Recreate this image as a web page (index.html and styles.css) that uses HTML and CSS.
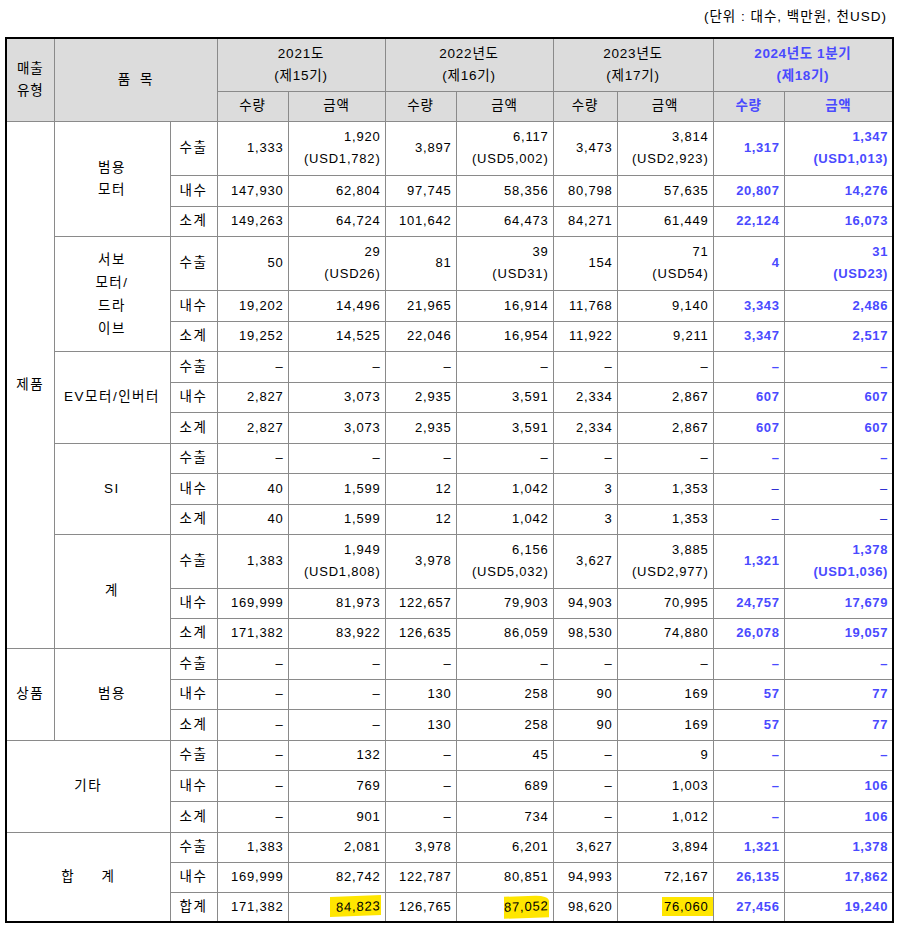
FILE: index.html
```html
<!DOCTYPE html>
<html lang="ko">
<head>
<meta charset="utf-8">
<link rel="stylesheet" href="styles.css">
</head>
<body>
<div class="unit">(단위 : 대수, 백만원, 천USD)</div>
<table class="sales">
<colgroup>
<col class="c1"><col class="c2"><col class="c3">
<col class="c4"><col class="c5"><col class="c6"><col class="c7">
<col class="c8"><col class="c9"><col class="c10"><col class="c11">
</colgroup>
<thead>
<tr class="h1">
<th rowspan="2">매출<br>유형</th>
<th rowspan="2" colspan="2">품 &nbsp;목</th>
<th colspan="2">2021도<br>(제15기)</th>
<th colspan="2">2022년도<br>(제16기)</th>
<th colspan="2">2023년도<br>(제17기)</th>
<th colspan="2" class="b">2024년도 1분기<br>(제18기)</th>
</tr>
<tr class="h2">
<th>수량</th><th>금액</th><th>수량</th><th>금액</th><th>수량</th><th>금액</th><th class="b">수량</th><th class="b">금액</th>
</tr>
</thead>
<tbody>
<tr class="d">
<td rowspan="15" class="lab">제품</td>
<td rowspan="3" class="lab">범용<br>모터</td>
<td class="lab">수출</td>
<td>1,333</td><td>1,920<br>(USD1,782)</td><td>3,897</td><td>6,117<br>(USD5,002)</td><td>3,473</td><td>3,814<br>(USD2,923)</td><td class="b">1,317</td><td class="b">1,347<br>(USD1,013)</td>
</tr>
<tr class="l"><td class="lab">내수</td><td>147,930</td><td>62,804</td><td>97,745</td><td>58,356</td><td>80,798</td><td>57,635</td><td class="b">20,807</td><td class="b">14,276</td></tr>
<tr class="s"><td class="lab">소계</td><td>149,263</td><td>64,724</td><td>101,642</td><td>64,473</td><td>84,271</td><td>61,449</td><td class="b">22,124</td><td class="b">16,073</td></tr>

<tr class="d">
<td rowspan="3" class="lab tall">서보<br>모터/<br>드라<br>이브</td>
<td class="lab">수출</td>
<td>50</td><td>29<br>(USD26)</td><td>81</td><td>39<br>(USD31)</td><td>154</td><td>71<br>(USD54)</td><td class="b">4</td><td class="b">31<br>(USD23)</td>
</tr>
<tr class="l"><td class="lab">내수</td><td>19,202</td><td>14,496</td><td>21,965</td><td>16,914</td><td>11,768</td><td>9,140</td><td class="b">3,343</td><td class="b">2,486</td></tr>
<tr class="s"><td class="lab">소계</td><td>19,252</td><td>14,525</td><td>22,046</td><td>16,954</td><td>11,922</td><td>9,211</td><td class="b">3,347</td><td class="b">2,517</td></tr>

<tr class="l">
<td rowspan="3" class="lab">EV모터/인버터</td>
<td class="lab">수출</td>
<td>–</td><td>–</td><td>–</td><td>–</td><td>–</td><td>–</td><td class="b">–</td><td class="b">–</td>
</tr>
<tr class="s"><td class="lab">내수</td><td>2,827</td><td>3,073</td><td>2,935</td><td>3,591</td><td>2,334</td><td>2,867</td><td class="b">607</td><td class="b">607</td></tr>
<tr class="l"><td class="lab">소계</td><td>2,827</td><td>3,073</td><td>2,935</td><td>3,591</td><td>2,334</td><td>2,867</td><td class="b">607</td><td class="b">607</td></tr>

<tr class="s">
<td rowspan="3" class="lab">SI</td>
<td class="lab">수출</td>
<td>–</td><td>–</td><td>–</td><td>–</td><td>–</td><td>–</td><td class="b">–</td><td class="b">–</td>
</tr>
<tr class="l"><td class="lab">내수</td><td>40</td><td>1,599</td><td>12</td><td>1,042</td><td>3</td><td>1,353</td><td class="db">–</td><td class="db">–</td></tr>
<tr class="s"><td class="lab">소계</td><td>40</td><td>1,599</td><td>12</td><td>1,042</td><td>3</td><td>1,353</td><td class="db">–</td><td class="db">–</td></tr>

<tr class="d">
<td rowspan="3" class="lab">계</td>
<td class="lab">수출</td>
<td>1,383</td><td>1,949<br>(USD1,808)</td><td>3,978</td><td>6,156<br>(USD5,032)</td><td>3,627</td><td>3,885<br>(USD2,977)</td><td class="b">1,321</td><td class="b">1,378<br>(USD1,036)</td>
</tr>
<tr class="s"><td class="lab">내수</td><td>169,999</td><td>81,973</td><td>122,657</td><td>79,903</td><td>94,903</td><td>70,995</td><td class="b">24,757</td><td class="b">17,679</td></tr>
<tr class="s"><td class="lab">소계</td><td>171,382</td><td>83,922</td><td>126,635</td><td>86,059</td><td>98,530</td><td>74,880</td><td class="b">26,078</td><td class="b">19,057</td></tr>

<tr class="l">
<td rowspan="3" class="lab">상품</td>
<td rowspan="3" class="lab">범용</td>
<td class="lab">수출</td>
<td>–</td><td>–</td><td>–</td><td>–</td><td>–</td><td>–</td><td class="b">–</td><td class="b">–</td>
</tr>
<tr class="s"><td class="lab">내수</td><td>–</td><td>–</td><td>130</td><td>258</td><td>90</td><td>169</td><td class="b">57</td><td class="b">77</td></tr>
<tr class="l"><td class="lab">소계</td><td>–</td><td>–</td><td>130</td><td>258</td><td>90</td><td>169</td><td class="b">57</td><td class="b">77</td></tr>

<tr class="s">
<td rowspan="3" colspan="2" class="lab">기타</td>
<td class="lab">수출</td>
<td>–</td><td>132</td><td>–</td><td>45</td><td>–</td><td>9</td><td class="b">–</td><td class="b">–</td>
</tr>
<tr class="l"><td class="lab">내수</td><td>–</td><td>769</td><td>–</td><td>689</td><td>–</td><td>1,003</td><td class="b">–</td><td class="b">106</td></tr>
<tr class="l"><td class="lab">소계</td><td>–</td><td>901</td><td>–</td><td>734</td><td>–</td><td>1,012</td><td class="b">–</td><td class="b">106</td></tr>

<tr class="s">
<td rowspan="3" colspan="2" class="lab">합 &nbsp; &nbsp; 계</td>
<td class="lab">수출</td>
<td>1,383</td><td>2,081</td><td>3,978</td><td>6,201</td><td>3,627</td><td>3,894</td><td class="b">1,321</td><td class="b">1,378</td>
</tr>
<tr class="s"><td class="lab">내수</td><td>169,999</td><td>82,742</td><td>122,787</td><td>80,851</td><td>94,993</td><td>72,167</td><td class="b">26,135</td><td class="b">17,862</td></tr>
<tr class="s"><td class="lab">합계</td><td>171,382</td><td><span class="hl hl1">84,823</span></td><td>126,765</td><td><span class="hl hl2">87,052</span></td><td>98,620</td><td><span class="hl hl3">76,060</span></td><td class="b">27,456</td><td class="b">19,240</td></tr>
</tbody>
</table>
</body>
</html>
```
FILE: styles.css
```css
html, body {
  margin: 0;
  padding: 0;
  background: #ffffff;
}
body {
  padding: 0 0 0 5px;
  font-family: "Liberation Sans", "Noto Sans CJK KR", sans-serif;
  font-size: 13px;
  color: #000;
}
.unit {
  width: 882px;
  height: 37px;
  line-height: 33px;
  text-align: right;
  letter-spacing: 1px;
  font-size: 13.5px;
}
.sales {
  border-collapse: collapse;
  table-layout: fixed;
  width: 889px;
  border: 2px solid #000;
}
.c1 { width: 48px; }
.c2 { width: 116px; }
.c3 { width: 47px; }
.c4 { width: 71px; }
.c5 { width: 97px; }
.c6 { width: 71px; }
.c7 { width: 97px; }
.c8 { width: 64px; }
.c9 { width: 96px; }
.c10 { width: 71px; }
.c11 { width: 109px; }
.sales th, .sales td {
  border: 1px solid #8a8a8a;
  padding: 0 4px 0 0;
  line-height: 22px;
  letter-spacing: 0.8px;
  white-space: nowrap;
  overflow: visible;
}
.sales th {
  background: #dcdcdc;
  font-weight: normal;
  text-align: center;
  padding: 0;
  vertical-align: middle;
  font-size: 13.5px;
}
.sales td {
  text-align: right;
  vertical-align: middle;
}
.sales td.lab {
  text-align: center;
  padding: 0;
  letter-spacing: 1.5px;
  font-size: 13.5px;
}
.sales td.tall {
  line-height: 23px;
}
.h1 { height: 53px; }
.h2 { height: 30px; }
.d { height: 54px; }
.s { height: 30px; }
.l { height: 31px; }
.sales .b {
  color: #4a4aff;
  font-weight: bold;
  letter-spacing: 0.6px;
}
.sales td.db {
  color: #1a1ad0;
  font-weight: normal;
}
.hl {
  display: inline-block;
  background: #ffe600;
  line-height: 19px;
}
.hl1 {
  padding: 1px 0 0 6px;
  transform: skewY(-2deg);
}
.hl2 {
  padding: 1px 0 2px 0;
  border-top-right-radius: 14px 6px;
  transform: skewY(-2deg);
}
.hl3 {
  padding: 0 4px 0 2px;
  margin-right: -4px;
}
```
